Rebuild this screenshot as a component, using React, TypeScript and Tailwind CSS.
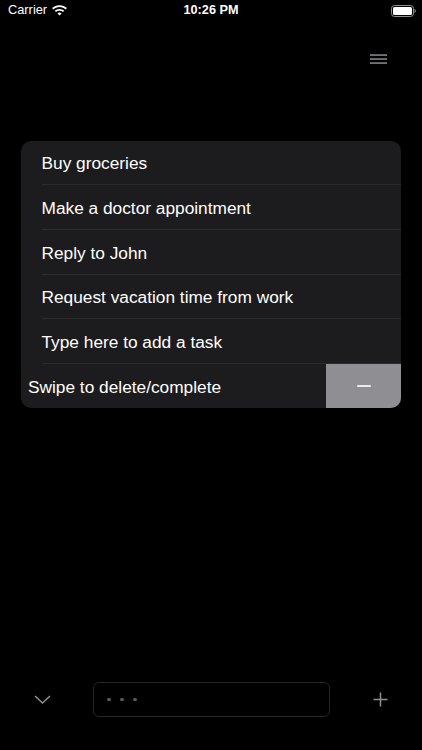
import React from "react";

const rows = [
  "Buy groceries",
  "Make a doctor appointment",
  "Reply to John",
  "Request vacation time from work",
  "Type here to add a task",
];

function Wifi() {
  return (
    <svg width="15" height="11" viewBox="0 0 15 11" fill="white">
      <path d="M7.5 0.2C4.6 0.2 2 1.3 0.1 3.1L1.3 4.4C2.9 2.9 5.1 2 7.5 2C9.9 2 12.1 2.9 13.7 4.4L14.9 3.1C13 1.3 10.4 0.2 7.5 0.2Z" />
      <path d="M7.5 3.9C5.7 3.9 4 4.6 2.8 5.8L4 7.1C4.9 6.2 6.1 5.7 7.5 5.7C8.9 5.7 10.1 6.2 11 7.1L12.2 5.8C11 4.6 9.3 3.9 7.5 3.9Z" />
      <path d="M7.5 7.5C6.7 7.5 6 7.8 5.5 8.4L7.5 10.6L9.5 8.4C9 7.8 8.3 7.5 7.5 7.5Z" />
    </svg>
  );
}

function Battery() {
  return (
    <svg width="25" height="12" viewBox="0 0 25 12">
      <rect x="0.5" y="0.5" width="22" height="11" rx="3" fill="none" stroke="#8e8e93" strokeWidth="1" />
      <rect x="2" y="2" width="19" height="8" rx="1.5" fill="white" />
      <path d="M23.5 4v4c0.8-0.3 1.3-1.1 1.3-2s-0.5-1.7-1.3-2z" fill="#8e8e93" />
    </svg>
  );
}

export default function App() {
  return (
    <div
      className="w-[422px] h-[750px] bg-black flex flex-col overflow-hidden"
      style={{ fontFamily: '"Liberation Sans", Arial, sans-serif' }}
    >
      {/* status bar */}
      <div className="h-[21px] grid grid-cols-3 items-center text-white">
        <div className="flex items-center pl-[8px] gap-[5px]">
          <span className="text-[12.8px] leading-none">Carrier</span>
          <Wifi />
        </div>
        <div className="text-center text-[12.7px] font-bold leading-none">10:26 PM</div>
        <div className="flex justify-end pr-[6px]">
          <Battery />
        </div>
      </div>

      {/* header */}
      <div className="h-[75px] flex items-center justify-end pr-[35px]">
        <svg width="17" height="10" viewBox="0 0 17 10">
          <rect x="0" y="0.4" width="17" height="1.3" fill="#a1a1a6" />
          <rect x="0" y="4.4" width="17" height="1.3" fill="#a1a1a6" />
          <rect x="0" y="8.4" width="17" height="1.3" fill="#a1a1a6" />
        </svg>
      </div>

      {/* card */}
      <div className="mx-[21px] mt-[44.5px] rounded-[10px] bg-[#1c1c1e] overflow-hidden text-white text-[17.3px]">
        {rows.map((r) => (
          <div
            key={r}
            className="ml-[20.5px] h-[44.7px] pt-[4px] flex items-center border-b border-[#2c2c2e]"
          >
            {r}
          </div>
        ))}
        <div className="h-[44.3px] flex items-stretch">
          <div className="flex-1 flex items-center pl-[7px] pt-[4px]">Swipe to delete/complete</div>
          <div className="w-[75px] bg-[#8e8e93] flex items-center justify-center">
            <div className="w-[14px] h-[2px] bg-[#ececf0] rounded-full" />
          </div>
        </div>
      </div>

      {/* bottom bar */}
      <div className="mt-auto mb-[33px] h-[35px] flex items-center pl-[34px]">
        <svg width="17" height="9" viewBox="0 0 17 9" fill="none">
          <polyline points="1,1 8.5,8 16,1" stroke="#8e8e93" strokeWidth="1.5" />
        </svg>
        <div className="ml-[42px] w-[237px] h-[35px] rounded-[6px] border border-[#26262a] flex items-center pl-[13px] gap-[9.5px]">
          <span className="w-[3.5px] h-[3.5px] rounded-full bg-[#5a5a5e]" />
          <span className="w-[3.5px] h-[3.5px] rounded-full bg-[#5a5a5e]" />
          <span className="w-[3.5px] h-[3.5px] rounded-full bg-[#5a5a5e]" />
        </div>
        <svg className="ml-[42.5px]" width="15" height="15" viewBox="0 0 15 15">
          <rect x="0.5" y="6.75" width="14" height="1.5" fill="#8e8e93" />
          <rect x="6.75" y="0.5" width="1.5" height="14" fill="#8e8e93" />
        </svg>
      </div>
    </div>
  );
}
